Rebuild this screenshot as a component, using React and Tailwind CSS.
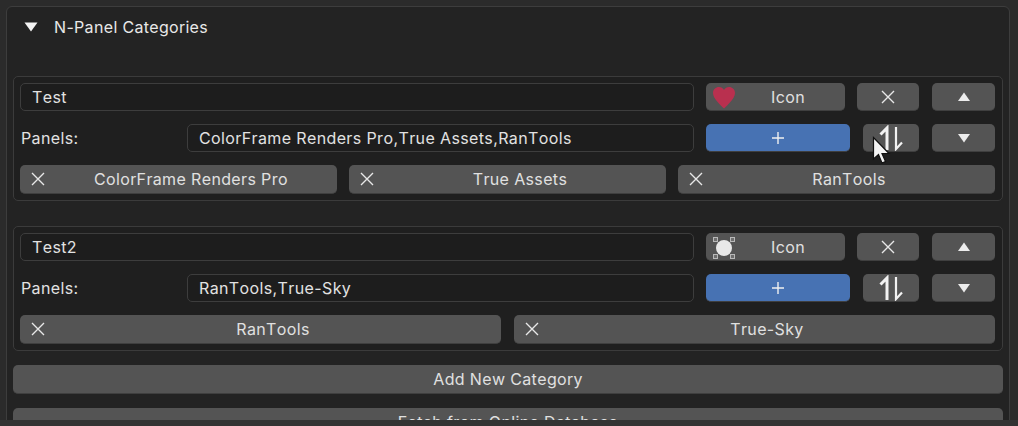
import React from 'react';

const btn = 'flex items-center justify-center rounded-[5px] bg-[#545454] text-[#e0e0e0] border-b border-[#3f3f3f] tracking-[0.36px]';
const field = 'flex h-[28px] items-center rounded-[5px] border border-[#3d3d3d] bg-[#1d1d1d] pl-[11px] text-[#e2e2e2]';

const CloseIcon = ({ size = 14 }) => (
  <svg width={size} height={size} viewBox="0 0 14 14" fill="none" stroke="#e8e8e8" strokeWidth="1.4">
    <path d="M1 1L13 13M13 1L1 13" />
  </svg>
);

const Triangle = ({ down }) => (
  <svg width="14" height="10" viewBox="0 0 14 10" fill="#ececec">
    <path d={down ? 'M1 1H13L7 9.5Z' : 'M7 .5L13 9H1Z'} />
  </svg>
);

const SortIcon = () => (
  <svg width="24" height="26" viewBox="0 0 24 26" fill="none" stroke="#f2f2f2">
    <path d="M8 25V3L1.500 9.500" strokeWidth="3" />
    <path d="M17 2V24L23 17.500" strokeWidth="2.200" />
  </svg>
);

const Heart = () => (
  <svg width="22" height="22" viewBox="0 0 22 22" fill="#b9304f">
    <path d="M11 21.500C7 17.500 0 11.500 0 6C0 2.500 2.800 0 6 0C8 0 10 1 11 3C12 1 14 0 16 0C19.200 0 22 2.500 22 6C22 11.500 15 17.500 11 21.500Z" />
  </svg>
);

const LightIcon = () => (
  <svg width="22" height="22" viewBox="0 0 22 22">
    <circle cx="11" cy="11" r="8" fill="#e8e8e8" />
    <g fill="#6e6e6e" stroke="#b8b8b8" strokeWidth="1">
      <rect x=".5" y=".5" width="4" height="4" />
      <rect x="17.500" y=".5" width="4" height="4" />
      <rect x=".5" y="17.500" width="4" height="4" />
      <rect x="17.500" y="17.500" width="4" height="4" />
    </g>
  </svg>
);

const Cursor = () => (
  <svg className="absolute left-[872px] top-[136px]" width="20" height="30" viewBox="0 0 20 30">
    <path d="M1.500 1.500V23L6.500 18.500L10 27L13.500 25.500L10 17.500H17Z" fill="#f4f4f4" stroke="#111" strokeWidth="1.200" />
  </svg>
);

const Chip = ({ label }) => (
  <div className={`${btn} relative h-[29px] flex-1 pl-[25px]`}>
    <span className="absolute left-[11px] top-[7px] flex"><CloseIcon /></span>
    <span>{label}</span>
  </div>
);

const Category = ({ name, panels, chips, icon, chipGap }) => (
  <div className="flex h-[125px] flex-col rounded-[5px] border border-[#3b3b3b] bg-[#1f1f1f] pl-[6px] pr-[7px] pt-[6px]">
    <div className="flex h-[28px] items-center">
      <div className={`${field} flex-1`}>{name}</div>
      <div className={`${btn} relative ml-[12px] h-[28px] w-[139px] pl-[25px]`}>
        <span className="absolute left-[7px] top-[4px] flex">{icon}</span>
        <span>Icon</span>
      </div>
      <div className={`${btn} ml-[12px] h-[28px] w-[62px]`}><CloseIcon /></div>
      <div className={`${btn} ml-[13px] h-[28px] w-[63px]`}><Triangle /></div>
    </div>
    <div className="mt-[13px] flex h-[28px] items-center">
      <div className="w-[167px] pl-[1px] text-[#e2e2e2]">Panels:</div>
      <div className={`${field} flex-1`}>{panels}</div>
      <div className={`${btn} ml-[12px] h-[28px] w-[144px] !bg-[#4772b3]`}>
        <svg width="14" height="14" viewBox="0 0 14 14" stroke="#f0f0f0" strokeWidth="1.400">
          <path d="M7 1V13M1 7H13" />
        </svg>
      </div>
      <div className={`${btn} ml-[13px] h-[28px] w-[56px]`}><SortIcon /></div>
      <div className={`${btn} ml-[13px] h-[28px] w-[63px]`}><Triangle down /></div>
    </div>
    <div className={`mt-[13px] flex ${chipGap}`}>
      {chips.map((chip) => <Chip key={chip} label={chip} />)}
    </div>
  </div>
);

export default function App() {
  return (
    <div className="relative flex h-[426px] w-[1018px] flex-col overflow-hidden bg-[#2b2b2b] font-['Inter',sans-serif] text-[16px] tracking-[0.38px] [font-kerning:none]">
      <div className="min-h-0 flex-1 overflow-hidden pl-[6px] pr-[8px] pt-[6px]">
        <div className="h-[500px] rounded-[6px] border border-[#3d3d3d] bg-[#232323] pl-[6px] pr-[6px]">
          <div className="flex h-[40px] items-center pl-[11px] tracking-[0.33px] text-[#e8e8e8]">
            <svg width="14" height="10" viewBox="0 0 14 10" fill="#f4f4f4"><path d="M.5 .5H13.500L7 9.500Z" /></svg>
            <span className="ml-[16px]">N-Panel Categories</span>
          </div>
          <div className="mt-[29px] flex flex-col gap-[25px]">
            <Category
              name="Test"
              panels="ColorFrame Renders Pro,True Assets,RanTools"
              chips={['ColorFrame Renders Pro', 'True Assets', 'RanTools']}
              icon={<Heart />}
              chipGap="gap-[12px]"
            />
            <Category
              name="Test2"
              panels="RanTools,True-Sky"
              chips={['RanTools', 'True-Sky']}
              icon={<LightIcon />}
              chipGap="gap-[13px]"
            />
          </div>
          <div className={`${btn} mt-[14px] h-[29px]`}>Add New Category</div>
          <div className={`${btn} mt-[14px] h-[29px]`}>Fetch from Online Database</div>
        </div>
      </div>
      <div className="h-[6px] shrink-0 bg-[#333333]" />
      <Cursor />
    </div>
  );
}
